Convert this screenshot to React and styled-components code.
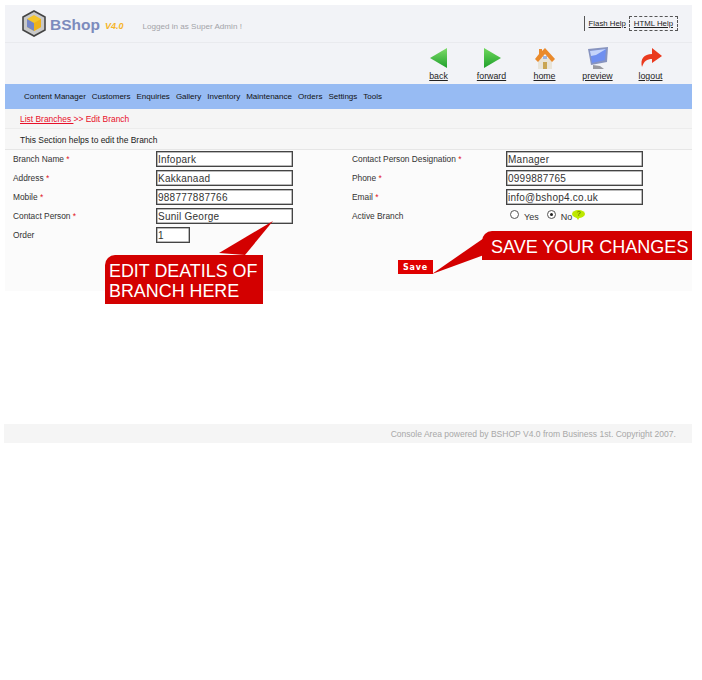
import React from "react";
import styled, { createGlobalStyle } from "styled-components";

const GlobalStyle = createGlobalStyle`
  html, body {
    margin: 0;
    padding: 0;
    background: #fff;
    font-family: "Liberation Sans", Arial, sans-serif;
    font-size: 8px;
    color: #222;
  }
`;

const Page = styled.div`
  width: 687px;
  margin: 5px 0 0 5px;
`;

const Header = styled.div`
  height: 37px;
  display: flex;
  align-items: center;
  background: #f2f3f7;
  border-bottom: 1px solid #e9eaee;
  padding: 0 14px 0 17px;
`;

const Brand = styled.div`
  display: flex;
  align-items: center;
  gap: 4px;
`;

const BrandName = styled.span`
  font-size: 15.5px;
  font-weight: bold;
  color: #7d8bbd;
  margin-top: 3px;
`;

const Version = styled.span`
  font-size: 9px;
  font-weight: bold;
  font-style: italic;
  color: #f5b52a;
  margin: 5px 0 0 1px;
`;

const Logged = styled.span`
  margin: 5px 0 0 15px;
  color: #a3a3a8;
  font-size: 8.1px;
`;

const HelpLinks = styled.div`
  margin-left: auto;
  display: flex;
  align-items: center;
  gap: 3px;
  margin-top: -1px;
  border-left: 1px solid #555;
  padding-left: 4px;
`;

const HelpLink = styled.a`
  color: #222;
  font-size: 7.8px;
  text-decoration: underline;
  padding: ${(p) => (p.$boxed ? "2px 4px" : "0")};
  border: ${(p) => (p.$boxed ? "1px dashed #555" : "none")};
`;

const Toolbar = styled.div`
  height: 41px;
  display: flex;
  justify-content: flex-end;
  background: #f2f3f7;
  padding-right: 15px;
`;

const ToolItem = styled.a`
  width: 53px;
  display: flex;
  flex-direction: column;
  align-items: center;
  justify-content: flex-start;
  padding-top: 4px;
  color: #222;
  font-size: 8.8px;
  text-decoration: underline;
  svg {
    display: block;
    width: 22px;
    height: 22px;
    margin-bottom: 2px;
  }
`;

const Nav = styled.div`
  height: 25px;
  background: #97bbf3;
  display: flex;
  align-items: center;
  gap: 6px;
  padding-left: 19px;
  color: #111;
  font-size: 8px;
`;

const Crumb = styled.div`
  height: 19px;
  display: flex;
  align-items: center;
  padding-left: 15px;
  background: #f5f5f5;
  border-bottom: 1px solid #ececec;
  color: #e8102a;
  font-size: 8.45px;
  a {
    color: #e8102a;
    text-decoration: underline;
    white-space: pre;
  }
`;

const SectionHelp = styled.div`
  height: 19px;
  display: flex;
  align-items: center;
  padding: 1px 0 0 15px;
  background: #f7f7f7;
  border-bottom: 1px solid #e6e6e6;
  color: #222;
  font-size: 8.45px;
`;

const Form = styled.div`
  position: relative;
  height: 141px;
  background: #fbfbfb;
  padding: 0 0 0 8px;
  box-sizing: border-box;
`;

const Grid = styled.div`
  display: grid;
  grid-template-columns: 143px 196px 154px 1fr;
  grid-auto-rows: 18.8px;
  align-items: center;
`;

const Label = styled.div`
  color: #333;
  font-size: 8.35px;
  span {
    color: #e01020;
  }
`;

const Field = styled.div`
  box-sizing: border-box;
  width: ${(p) => p.$width || 137}px;
  height: 16px;
  background: #fff;
  border: 1px solid #444;
  box-shadow: inset 0 0 0 0.5px #777;
  padding-left: 1px;
  font-size: 10px;
  line-height: 16px;
  color: #333;
  letter-spacing: 0.25px;
`;

const Radios = styled.div`
  display: flex;
  align-items: center;
  padding-left: 4px;
  color: #333;
  font-size: 9px;
`;

const Radio = styled.span`
  box-sizing: border-box;
  width: 9px;
  height: 9px;
  border-radius: 50%;
  border: 1px solid #555;
  background: #fff;
  margin: -3px 5px 0 0;
  display: flex;
  align-items: center;
  justify-content: center;
  &::after {
    content: "";
    display: ${(p) => (p.$checked ? "block" : "none")};
    width: 3px;
    height: 3px;
    border-radius: 50%;
    background: #222;
  }
`;

const RadioText = styled.span`
  margin: 2px 8px 0 0;
`;

const Hint = styled.span`
  position: relative;
  width: 13px;
  height: 8px;
  margin: -3px 0 0 -8px;
  border-radius: 50%;
  background: #bde800;
  color: #4c5a00;
  font-size: 7px;
  line-height: 8px;
  text-align: center;
  &::after {
    content: "";
    position: absolute;
    left: 4px;
    top: 7px;
    border-top: 3px solid #bde800;
    border-left: 2px solid transparent;
    border-right: 2px solid transparent;
  }
`;

const SaveRow = styled.div`
  display: flex;
  padding: 16px 0 0 385px;
`;

const SaveButton = styled.div`
  width: 35px;
  height: 14px;
  background: #e00000;
  color: #fff;
  font-family: "DejaVu Sans", sans-serif;
  font-size: 8px;
  font-weight: bold;
  letter-spacing: 0.8px;
  line-height: 15px;
  text-align: center;
`;

const Callout = styled.div`
  position: absolute;
  left: ${(p) => p.$left}px;
  top: ${(p) => p.$top}px;
  width: ${(p) => p.$width}px;
  height: ${(p) => p.$height}px;
  box-sizing: border-box;
  padding: ${(p) => p.$padding};
  background: #d30000;
  border-top-left-radius: 10px;
  color: #fff;
  font-size: ${(p) => p.$size}px;
  line-height: 20px;
  white-space: nowrap;
`;

const Pointer = styled.svg`
  position: absolute;
  left: 0;
  top: 0;
  width: 687px;
  height: 154px;
  overflow: visible;
  pointer-events: none;
`;

const Footer = styled.div`
  height: 19px;
  margin: 133px 0 0 -1px;
  background: #f5f5f5;
  display: flex;
  align-items: center;
  justify-content: flex-end;
  padding-right: 16px;
  color: #a8a8a8;
  font-size: 8.55px;
`;

const rows = [
  ["Branch Name", true, "Infopark", "Contact Person Designation", true, "Manager"],
  ["Address", true, "Kakkanaad", "Phone", true, "0999887765"],
  ["Mobile", true, "988777887766", "Email", true, "info@bshop4.co.uk"],
];

const menu = ["Content Manager", "Customers", "Enquiries", "Gallery", "Inventory", "Maintenance", "Orders", "Settings", "Tools"];

const Logo = () => (
  <svg width="24" height="27" viewBox="0 0 24 27">
    <path d="M12 1 L23 7 V20 L12 26 L1 20 V7 Z" fill="#c9c9c9" stroke="#444" strokeWidth="1.6" />
    <path d="M12 5 L19 9 V17 L12 21 L5 17 V9 Z" fill="#f5c52a" />
    <path d="M5 9 L12 13 V21 L5 17 Z" fill="#7486c8" />
    <path d="M12 13 L19 9 V17 L12 21 Z" fill="#eeb21c" />
  </svg>
);

const BackIcon = () => (
  <svg viewBox="0 0 22 22">
    <defs>
      <linearGradient id="gb" x1="0" y1="0" x2="0" y2="1">
        <stop offset="0" stopColor="#7fdc6a" />
        <stop offset="1" stopColor="#1fa02c" />
      </linearGradient>
    </defs>
    <path d="M2 11 L19 1 V21 Z" fill="url(#gb)" />
  </svg>
);

const ForwardIcon = () => (
  <svg viewBox="0 0 22 22">
    <defs>
      <linearGradient id="gf" x1="0" y1="0" x2="0" y2="1">
        <stop offset="0" stopColor="#6fd85c" />
        <stop offset="1" stopColor="#1fa02c" />
      </linearGradient>
    </defs>
    <path d="M20 11 L3 1 V21 Z" fill="url(#gf)" />
  </svg>
);

const HomeIcon = () => (
  <svg viewBox="0 0 22 22">
    <path d="M4 11 H18 V22 H4 Z" fill="#e9e4d8" />
    <path d="M9 15 H13 V22 H9 Z" fill="#c9a552" />
    <path d="M9 9 H13 V12 H9 Z" fill="#9db4e0" />
    <path d="M11 1 L21 12 L18 15 L11 7 L4 15 L1 12 L5 7 V2 H8 V4 Z" fill="#ea8a2c" />
  </svg>
);

const PreviewIcon = () => (
  <svg viewBox="0 0 22 22">
    <path d="M6 18 L13 19 L17 22 H6 Z" fill="#9a9aa0" />
    <path d="M1 2 L21 0 L20 15 L4 18 Z" fill="#8894bf" />
    <path d="M3 4 L19 2 L18 13 L5 16 Z" fill="#6f8ff0" />
    <path d="M3 4 L19 2 L9 8 L4 9 Z" fill="#c5d4fa" />
  </svg>
);

const LogoutIcon = () => (
  <svg viewBox="0 0 22 22">
    <path d="M2 20 C0 12 4 7 12 7 V1 L22 9 L12 16 V12 C7 12 4 14 2 20 Z" fill="#ea3a1e" />
  </svg>
);

const tools = [
  ["back", BackIcon],
  ["forward", ForwardIcon],
  ["home", HomeIcon],
  ["preview", PreviewIcon],
  ["logout", LogoutIcon],
];

const App = () => {
  return (
    <Page>
      <GlobalStyle />
      <Header>
        <Brand>
          <Logo />
          <BrandName>BShop</BrandName>
          <Version>V4.0</Version>
          <Logged>Logged in as Super Admin !</Logged>
        </Brand>
        <HelpLinks>
          <HelpLink>Flash Help</HelpLink>
          <HelpLink $boxed>HTML Help</HelpLink>
        </HelpLinks>
      </Header>
      <Toolbar>
        {tools.map(([name, Icon]) => (
          <ToolItem key={name}>
            <Icon />
            {name}
          </ToolItem>
        ))}
      </Toolbar>
      <Nav>
        {menu.map((item) => (
          <span key={item}>{item}</span>
        ))}
      </Nav>
      <Crumb>
        <a>List Branches </a>&gt;&gt; Edit Branch
      </Crumb>
      <SectionHelp>This Section helps to edit the Branch</SectionHelp>
      <Form>
        <Grid>
          {rows.map((row) => (
            <React.Fragment key={row[0]}>
              <Label>
                {row[0]} <span>*</span>
              </Label>
              <Field>{row[2]}</Field>
              <Label>
                {row[3]} <span>*</span>
              </Label>
              <Field>{row[5]}</Field>
            </React.Fragment>
          ))}
          <Label>
            Contact Person <span>*</span>
          </Label>
          <Field>Sunil George</Field>
          <Label>Active Branch</Label>
          <Radios>
            <Radio />
            <RadioText>Yes</RadioText>
            <Radio $checked />
            <RadioText>No</RadioText>
            <Hint>?</Hint>
          </Radios>
          <Label>Order</Label>
          <Field $width={34}>1</Field>
        </Grid>
        <SaveRow>
          <SaveButton>Save</SaveButton>
        </SaveRow>
        <Pointer viewBox="0 0 687 154">
          <path d="M214 103 L268 71 L240 105 Z" fill="#d30000" />
          <path d="M479 88 L427 124 L479 105 Z" fill="#d30000" />
        </Pointer>
        <Callout $left={100} $top={105} $width={158} $height={49} $size={17.9} $padding="6px 0 0 4px">
          EDIT DEATILS OF
          <br />
          BRANCH HERE
        </Callout>
        <Callout $left={477} $top={81} $width={210} $height={29} $size={18} $padding="6px 0 0 9px">
          SAVE YOUR CHANGES
        </Callout>
      </Form>
      <Footer>Console Area powered by BSHOP V4.0 from Business 1st. Copyright 2007.</Footer>
    </Page>
  );
};

export default App;
